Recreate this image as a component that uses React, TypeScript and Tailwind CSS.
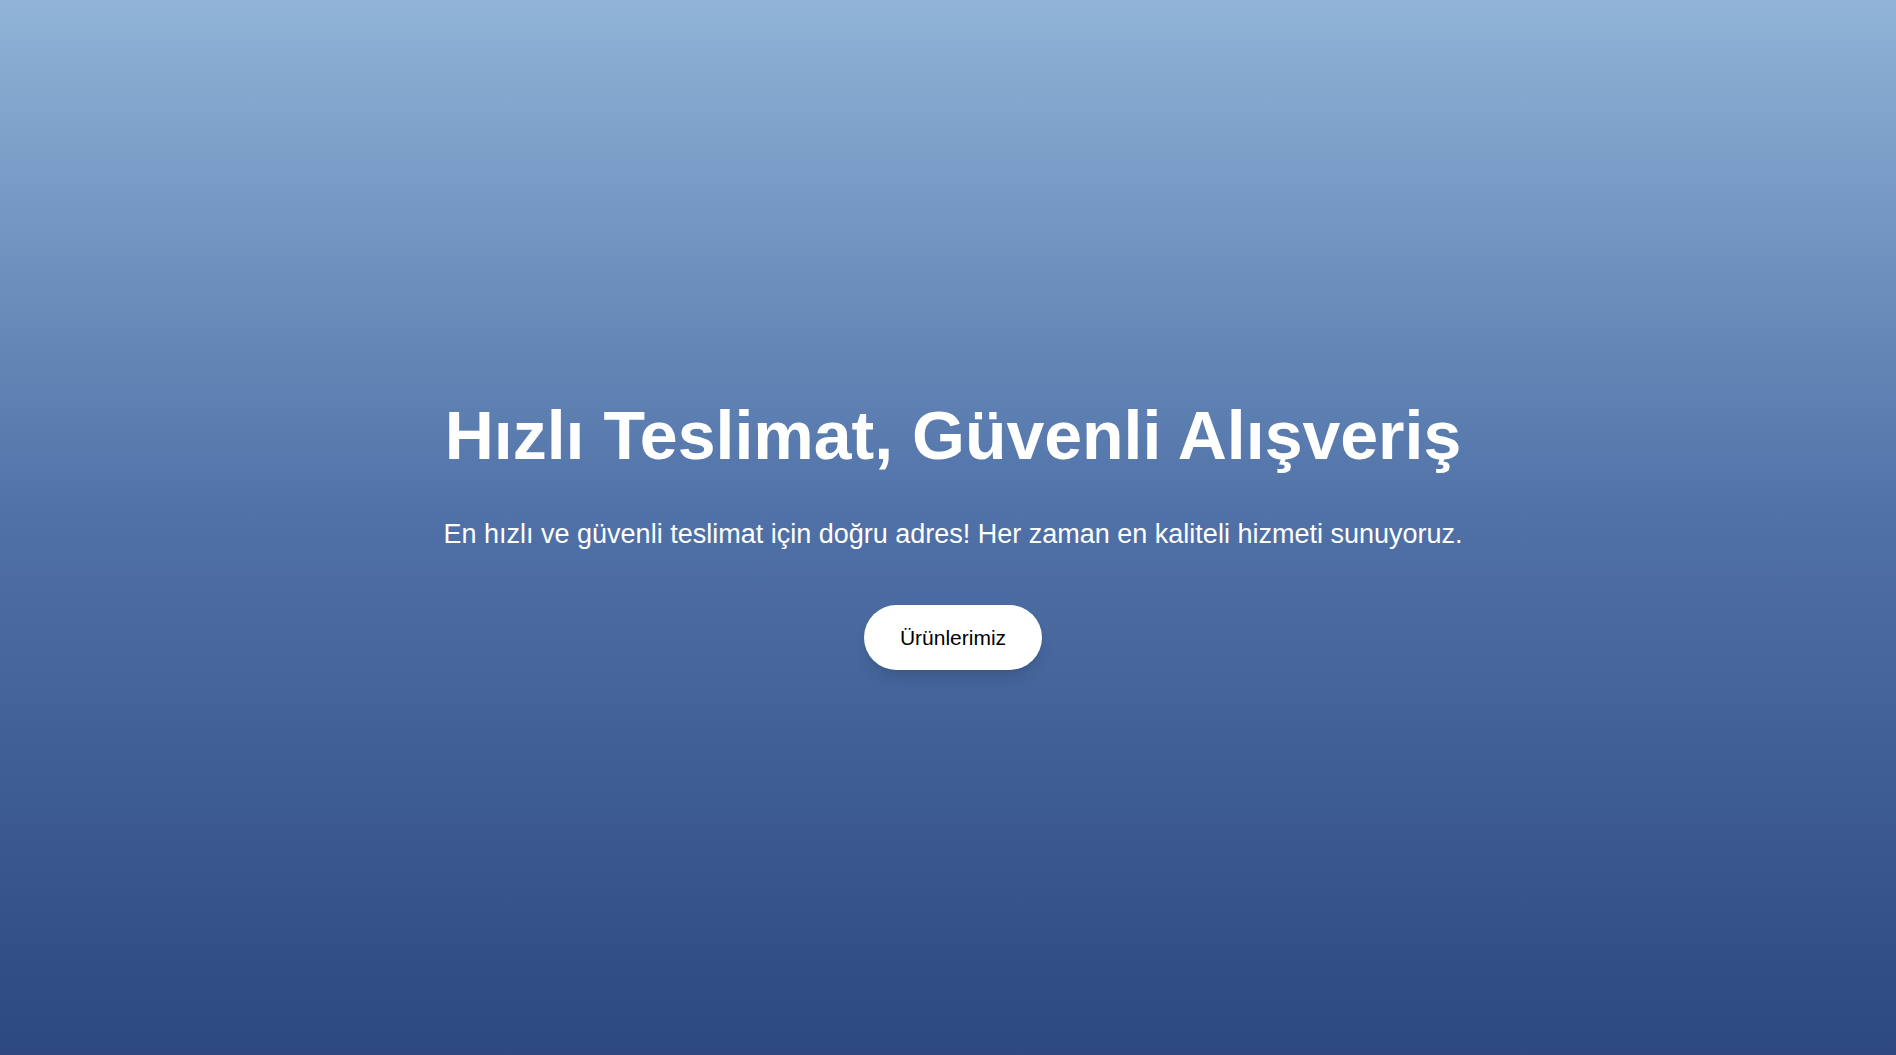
export default function App() {
  return (
    <div className="min-h-screen w-full pt-[10px] pl-[10px] flex flex-col items-center justify-center bg-gradient-to-b from-[#90b3d7] via-[#4f70a6] to-[#2d497f] text-white text-center font-['Liberation_Sans',Arial,sans-serif]">
      <h1 className="text-[68px] leading-[1.2] font-bold mb-[38px]">Hızlı Teslimat, Güvenli Alışveriş</h1>
      <p className="text-[27px] leading-[1.5] mb-[50px]">
        En hızlı ve güvenli teslimat için doğru adres! Her zaman en kaliteli hizmeti sunuyoruz.
      </p>
      <button className="bg-white text-black text-[21px] leading-[1.5] px-9 py-[17px] rounded-full shadow-lg">
        Ürünlerimiz
      </button>
    </div>
  );
}
